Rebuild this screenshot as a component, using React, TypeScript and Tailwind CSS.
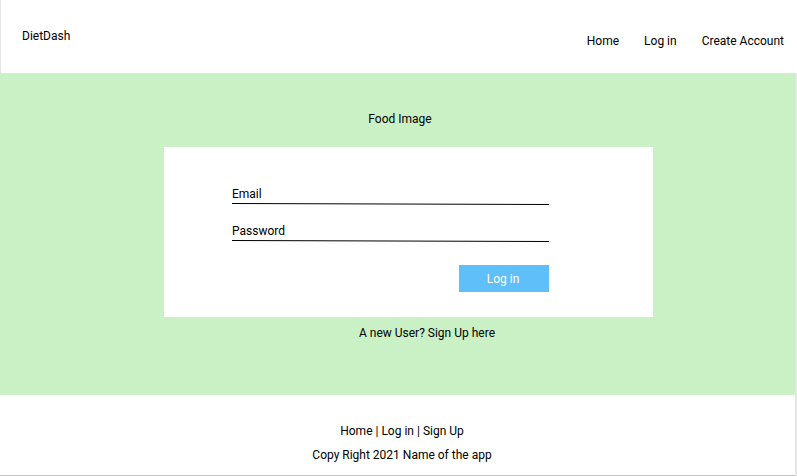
import React from "react";

type FieldProps = {
  id: string;
  label: string;
  type: string;
};

function Field({ id, label, type }: FieldProps) {
  return (
    <div>
      <div className="flex h-4 items-center gap-2">
        <label htmlFor={id}>{label}</label>
        <input
          id={id}
          name={id}
          type={type}
          className="h-4 min-w-0 flex-1 bg-transparent outline-none"
        />
      </div>
      <svg
        className="mt-px block h-[2px] w-full"
        viewBox="0 0 317 2"
        preserveAspectRatio="none"
        aria-hidden="true"
      >
        <line x1="0" y1="0.5" x2="317" y2="1.5" stroke="black" strokeWidth="1" />
      </svg>
    </div>
  );
}

export default function App() {
  return (
    <div className="bg-white font-[Roboto,sans-serif] text-xs text-black antialiased">
      <header className="flex h-[73px] items-start justify-between border-l border-[#e5e5e5] pr-[13px] pl-[21px]">
        <a href="#home" className="pt-7">
          DietDash
        </a>
        <nav className="flex gap-[25px] pt-[33px]">
          <a href="#home">Home</a>
          <a href="#login">Log in</a>
          <a href="#signup">Create Account</a>
        </nav>
      </header>

      <div className="border-r-2 border-[#e5e5e5]">
        <main className="bg-[#caf0c5] pt-[38px] pb-[54px] pl-[22px]">
          <p className="pr-[17px] text-center">Food Image</p>
          <form
            className="mx-auto mt-5 max-w-[489px] bg-white pt-[39px] pr-[104px] pb-[25px] pl-[68px]"
            onSubmit={(event) => event.preventDefault()}
          >
            <div className="flex flex-col gap-[18px]">
              <Field id="email" label="Email" type="email" />
              <Field id="password" label="Password" type="password" />
            </div>
            <button
              type="submit"
              className="mt-[23px] ml-auto block h-[27px] w-[90px] bg-[#5fbff9] pr-0.5 text-white"
            >
              Log in
            </button>
          </form>
          <p className="mt-2 pl-[37px] text-center">
            A new User? <a href="#signup">Sign Up here</a>
          </p>
        </main>

        <footer className="border-b border-[#c4c4c4] pt-7 pb-3 pl-[9px] text-center">
          <nav>
            <a href="#home">Home</a> | <a href="#login">Log in</a> |{" "}
            <a href="#signup">Sign Up</a>
          </nav>
          <p className="mt-2">Copy Right 2021 Name of the app</p>
        </footer>
      </div>
    </div>
  );
}
